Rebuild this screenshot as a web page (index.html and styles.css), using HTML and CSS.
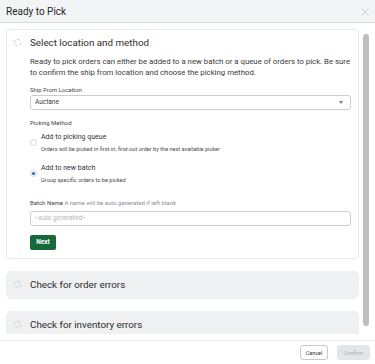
FILE: index.html
```html
<!DOCTYPE html>
<html lang="en">
<head>
    <meta charset="UTF-8">
    <meta name="viewport" content="width=device-width, initial-scale=1.0">
    <title>Ready to Pick</title>
    <link rel="stylesheet" href="styles.css">
</head>
<body>
    <div class="modal">
        <div class="modal-header">
            <h1 class="modal-title">Ready to Pick</h1>
            <span class="close-btn">
                <svg width="8" height="8" viewBox="0 0 8 8"><path d="M0.5 0.5 L7.5 7.5 M7.5 0.5 L0.5 7.5" stroke="#c4c7cb" stroke-width="0.8" fill="none"/></svg>
            </span>
        </div>

        <div class="modal-body">
            <div class="scroll-content">
                <!-- 第一步：选择地点和方式 -->
                <div class="step step-open">
                    <div class="step-head">
                        <span class="step-icon"></span>
                        <span class="step-title">Select location and method</span>
                    </div>
                    <div class="step-body">
                        <p class="step-desc">Ready to pick orders can either be added to a new batch or a queue of orders to pick. Be sure to confirm the ship from location and choose the picking method.</p>

                        <div class="field-label">Ship From Location</div>
                        <div class="select-box">
                            <span>Auctane</span>
                            <span class="caret"></span>
                        </div>

                        <div class="field-label label-gap">Picking Method</div>
                        <div class="option">
                            <span class="radio"></span>
                            <div class="option-text">
                                <div class="option-title">Add to picking queue</div>
                                <div class="option-sub">Orders will be picked in first-in, first-out order by the next available picker</div>
                            </div>
                        </div>
                        <div class="option option-second">
                            <span class="radio radio-checked"></span>
                            <div class="option-text">
                                <div class="option-title">Add to new batch</div>
                                <div class="option-sub">Group specific orders to be picked</div>
                            </div>
                        </div>

                        <div class="field-label batch-label">Batch Name <span class="hint">A name will be auto generated if left blank</span></div>
                        <div class="text-input">--auto generated--</div>

                        <button class="btn-next">Next</button>
                    </div>
                </div>

                <div class="step step-closed">
                    <div class="step-head">
                        <span class="step-icon"></span>
                        <span class="step-title">Check for order errors</span>
                    </div>
                </div>

                <div class="step step-closed">
                    <div class="step-head">
                        <span class="step-icon"></span>
                        <span class="step-title">Check for inventory errors</span>
                    </div>
                </div>
            </div>

            <!-- 滚动条 -->
            <div class="scrollbar">
                <div class="scrollbar-thumb"></div>
            </div>
        </div>

        <div class="modal-footer">
            <button class="btn-cancel">Cancel</button>
            <button class="btn-confirm">Confirm</button>
        </div>
    </div>
</body>
</html>
```

FILE: styles.css
```css
body {
    margin: 0;
    font-family: Roboto, 'Liberation Sans', Arial, sans-serif;
    background-color: #ffffff;
    color: #333333;
}
.modal {
    width: 375px;
    height: 364px;
    display: flex;
    flex-direction: column;
    background: #ffffff;
}

/* 顶部标题栏 */
.modal-header {
    height: 22px;
    flex-shrink: 0;
    display: flex;
    align-items: center;
    justify-content: space-between;
    padding: 0 6px 0 6px;
    background-color: #f3f4f6;
    border-bottom: 1px solid #d7d9dc;
}
.modal-title {
    margin: 0;
    font-size: 10px;
    font-weight: 400;
    color: #262626;
}
.close-btn {
    display: flex;
    margin-top: 2px;
}

/* 内容区 */
.modal-body {
    flex: 1;
    min-height: 0;
    display: flex;
    padding-right: 5px;
}
.scroll-content {
    flex: 1;
    min-width: 0;
    overflow: hidden;
    padding: 6px 3px 0 6px;
}
.scrollbar {
    width: 8px;
    flex-shrink: 0;
    padding-top: 11px;
    box-sizing: border-box;
}
.scrollbar-thumb {
    height: 292px;
    margin: 0 1px;
    background: #bfbfbf;
    border-radius: 3px;
}

.step {
    border-radius: 5px;
    margin-bottom: 12px;
}
.step-open {
    border: 1px solid #e6e8eb;
    padding: 6px 7px 8px 0;
}
.step-closed {
    background-color: #eff0f2;
    border: 1px solid #eff0f2;
}
.step-head {
    height: 13px;
    display: flex;
    align-items: center;
}
.step-closed .step-head {
    height: 26px;
}
.step-icon {
    width: 7px;
    height: 7px;
    margin-left: 7px;
    margin-right: 9px;
    border: 1px dashed #c9ccd0;
    border-radius: 50%;
    box-sizing: border-box;
    flex-shrink: 0;
}
.step-title {
    font-size: 9.8px;
    color: #2e2e2e;
}
.step-body {
    padding-left: 23px;
}
.step-desc {
    margin: 7px 0 0 0;
    font-size: 7.8px;
    line-height: 11px;
    color: #3a3a3a;
}

/* 表单字段 */
.field-label {
    margin-top: 8px;
    font-size: 6px;
    line-height: 8px;
    color: #444444;
}
.label-gap {
    margin-top: 9px;
}
.select-box {
    margin-top: 0.5px;
    height: 15px;
    box-sizing: border-box;
    border: 1px solid #c9cdd2;
    border-radius: 3px;
    display: flex;
    align-items: center;
    justify-content: space-between;
    padding: 0 7px 0 4px;
    font-size: 6.5px;
    color: #3a3a3a;
}
.caret {
    width: 0;
    height: 0;
    border-left: 2.5px solid transparent;
    border-right: 2.5px solid transparent;
    border-top: 3px solid #7a7f85;
}

.option {
    margin-top: 5px;
    display: flex;
    align-items: center;
}
.option-second {
    margin-top: 10px;
}
.radio {
    width: 7px;
    height: 7px;
    box-sizing: border-box;
    border: 1px solid #d3d6da;
    border-radius: 50%;
    margin-right: 4px;
    flex-shrink: 0;
    display: flex;
    align-items: center;
    justify-content: center;
}
.radio-checked::after {
    content: '';
    width: 3px;
    height: 3px;
    border-radius: 50%;
    background-color: #1d5fd8;
}
.option-title {
    font-size: 7px;
    line-height: 10px;
    color: #333333;
}
.option-sub {
    margin-top: 3px;
    font-size: 5.6px;
    line-height: 8px;
    color: #4a4a4a;
}

.batch-label {
    margin-top: 15px;
}
.hint {
    color: #8b9097;
}
.text-input {
    margin-top: 4px;
    height: 15px;
    box-sizing: border-box;
    border: 1px solid #c9cdd2;
    border-radius: 3px;
    padding: 0 4px;
    display: flex;
    align-items: center;
    font-size: 6.5px;
    color: #b3b7bc;
}
.btn-next {
    margin-top: 9px;
    height: 15px;
    width: 26px;
    padding: 0;
    border: 0;
    border-radius: 2px;
    background-color: #17693a;
    color: #ffffff;
    font-family: inherit;
    font-size: 6.5px;
    font-weight: 700;
}

/* 底部按钮 */
.modal-footer {
    flex-shrink: 0;
    margin-top: 6px;
    border-top: 1px solid #eceef0;
    padding: 4px 5px 4px 0;
    display: flex;
    justify-content: flex-end;
    gap: 9px;
}
.btn-cancel,
.btn-confirm {
    height: 15px;
    padding: 0;
    border-radius: 3px;
    font-family: inherit;
    font-size: 5.5px;
}
.btn-cancel {
    width: 28px;
    background: #ffffff;
    border: 1px solid #c7cacf;
    color: #333333;
}
.btn-confirm {
    width: 33px;
    background: #e2e5e9;
    border: 1px solid #e2e5e9;
    color: #a9aeb5;
}
```
